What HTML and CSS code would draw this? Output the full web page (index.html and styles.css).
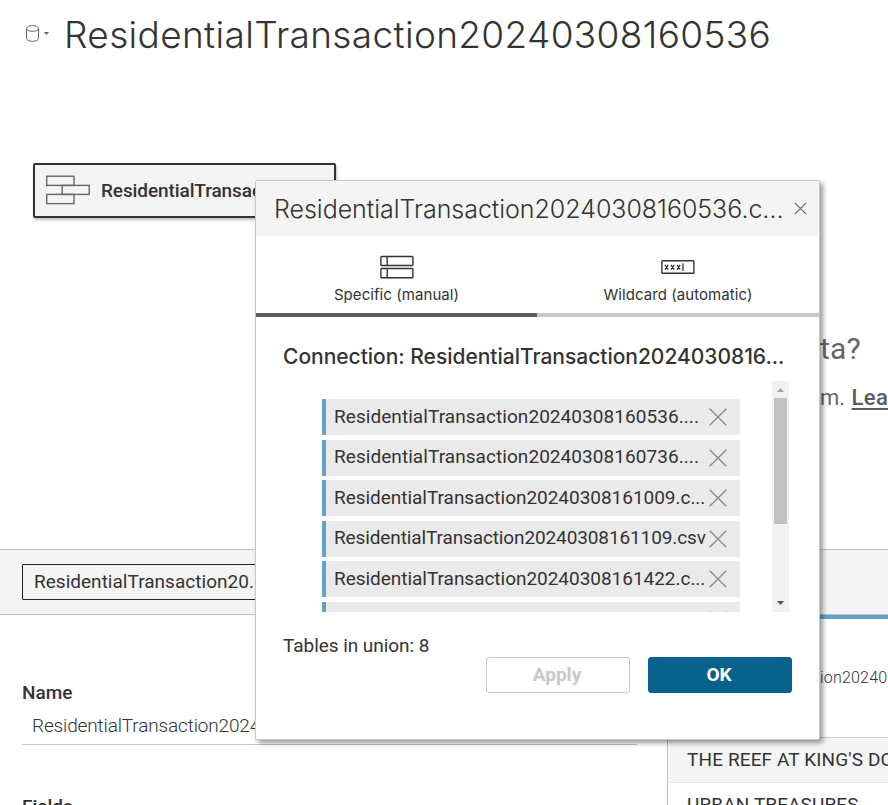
FILE: index.html
```html
<!DOCTYPE html>
<html lang="en">
<head>
<meta charset="utf-8">
<title>Data Source</title>
<link rel="stylesheet" href="styles.css">
</head>
<body>
<div class="page">
  <header class="top">
    <svg class="db" width="26" height="20" viewBox="0 0 26 20" fill="none" stroke="#666" stroke-width="1"><ellipse cx="7.5" cy="4.5" rx="6" ry="2.9"/><path d="M1.5 4.5V14.5C1.5 18.2 13.5 18.2 13.5 14.5V4.5"/><path d="M19 8h5l-2.5 3z" fill="#666" stroke="none"/></svg>
    <h1>ResidentialTransaction20240308160536</h1>
  </header>
  <section class="canvas">
    <div class="node">
      <svg width="46" height="32" viewBox="0 0 46 32" fill="none" stroke="#666" stroke-width="1.4"><rect x="1.7" y="1.2" width="27.3" height="9.2"/><rect x="17.2" y="10.4" width="27" height="9"/><rect x="1.7" y="19.4" width="27.3" height="9.2"/></svg>
      <span>ResidentialTransaction...</span>
    </div>
    <div class="hint">
      <p class="hint-title">ta?</p>
      <p class="hint-text">m. <a>Lea</a></p>
    </div>
  </section>
  <section class="bar"><div class="select">ResidentialTransaction20...</div></section>
  <section class="bottom">
    <div class="meta">
      <h2>Name</h2>
      <div class="name-input">ResidentialTransaction20240</div>
      <h2 class="fields">Fields</h2>
    </div>
    <div class="grid">
      <div class="grid-head">ion20240</div>
      <div class="grid-body">
        <div class="row alt">THE REEF AT KING'S DOCK</div>
        <div class="row">URBAN TREASURES</div>
      </div>
    </div>
  </section>
  <div class="dialog">
    <div class="dialog-head">
      <span class="dialog-title">ResidentialTransaction20240308160536.c...</span>
      <svg width="13" height="13" viewBox="0 0 13 13" stroke="#666" stroke-width="1.2"><path d="M.8.8l11.4 11.4M12.2.8L.8 12.2"/></svg>
    </div>
    <div class="tabs">
      <div class="tab active">
        <svg width="34" height="24" viewBox="0 0 34 24" fill="none" stroke="#333" stroke-width="1.4"><rect x=".9" y="1.5" width="32" height="9" rx=".8"/><rect x=".9" y="13.5" width="32" height="9.3" rx=".8"/><path d="M7.2 1.5v9M7.2 13.5v9.3"/></svg>
        <span>Specific (manual)</span>
      </div>
      <div class="tab wild">
        <svg width="34" height="24" viewBox="0 0 34 24" fill="none" stroke="#333" stroke-width="1.4"><rect x=".9" y="5.8" width="32" height="12.4" rx=".8"/><path d="M4 9.9l3.2 4.7M7.2 9.9L4 14.6M10 9.9l3.2 4.7M13.2 9.9L10 14.6M16 9.9l3.2 4.7M19.2 9.9L16 14.6M22 8.3v7.6" stroke-width="1.25"/></svg>
        <span>Wildcard (automatic)</span>
      </div>
    </div>
    <div class="connection">Connection: ResidentialTransaction2024030816...</div>
    <div class="list">
      <div class="items">
        <div class="item"><span class="wide">ResidentialTransaction20240308160536....</span><svg viewBox="0 0 18 18"><path d="M.7.7l16.6 16.6M17.3.7L.7 17.3"/></svg></div>
        <div class="item"><span class="wide">ResidentialTransaction20240308160736....</span><svg viewBox="0 0 18 18"><path d="M.7.7l16.6 16.6M17.3.7L.7 17.3"/></svg></div>
        <div class="item"><span>ResidentialTransaction20240308161009.c...</span><svg viewBox="0 0 18 18"><path d="M.7.7l16.6 16.6M17.3.7L.7 17.3"/></svg></div>
        <div class="item"><span class="tight">ResidentialTransaction20240308161109.csv</span><svg viewBox="0 0 18 18"><path d="M.7.7l16.6 16.6M17.3.7L.7 17.3"/></svg></div>
        <div class="item"><span>ResidentialTransaction20240308161422.c...</span><svg viewBox="0 0 18 18"><path d="M.7.7l16.6 16.6M17.3.7L.7 17.3"/></svg></div>
        <div class="item"><span></span><svg viewBox="0 0 18 18"><path d="M.7.7l16.6 16.6M17.3.7L.7 17.3"/></svg></div>
      </div>
      <div class="scroll">
        <svg width="17" height="17" viewBox="0 0 17 17" fill="#a3a3a3"><path d="M5 11l3.5-4 3.5 4z"/></svg>
        <div class="thumb"></div>
        <svg width="17" height="17" viewBox="0 0 17 17" fill="#505050"><path d="M5 6l3.5 4L12 6z"/></svg>
      </div>
    </div>
    <div class="count">Tables in union: 8</div>
    <div class="actions"><button class="apply">Apply</button><button class="ok">OK</button></div>
  </div>
</div>
</body>
</html>
```
FILE: styles.css
```css
* { box-sizing: border-box; }
body { margin: 0; background: #fff; color: #333; font: 400 19px/24px Roboto, "Liberation Sans", sans-serif; }
h1, h2, p { margin: 0; }
svg { display: block; flex: none; }
.page { position: relative; width: 888px; height: 805px; overflow: hidden; display: flex; flex-direction: column; white-space: nowrap; }
.top { flex: none; height: 74px; padding-left: 25px; display: flex; align-items: flex-start; }
.db { margin-top: 24px; }
h1 { margin: 13px 0 0 13px; font-family: Inter, sans-serif; font-size: 37px; line-height: 44px; font-weight: 300; letter-spacing: .35px; }

.canvas { flex: none; height: 475px; display: flex; justify-content: space-between; }
.node { margin: 89px 0 0 33px; width: 303px; height: 55px; border: 2px solid #333; border-radius: 2px; background: #f4f4f4; box-shadow: 1px 2px 3px rgba(0,0,0,.25); display: flex; align-items: center; padding: 0 0 0 10px; gap: 10px; font-weight: 500; letter-spacing: -.1px; overflow: hidden; }
.hint { width: 68px; padding-top: 257px; color: #666; }
.hint-title { font-size: 30px; line-height: 36px; letter-spacing: .2px; }
.hint-text { margin-top: 18px; font-size: 22px; line-height: 26px; }
.hint-text a { margin-left: 1px; font-weight: 500; color: #5b5b5b; text-decoration: underline; text-decoration-thickness: 2px; text-underline-offset: 3px; letter-spacing: .4px; }

.bar { flex: none; height: 66px; background: #f4f4f4; border: solid #bfbfbf; border-width: 1px 0; padding: 14px 0 0 22px; }
.select { width: 300px; height: 36px; border: 1px solid #222; border-radius: 1px; padding: 4px 0 0 11px; line-height: 26px; letter-spacing: .02px; }

.bottom { flex: 1; min-height: 0; display: flex; }
.meta { width: 667px; padding: 66px 30px 0 22px; }
h2 { font-size: 19px; line-height: 24px; font-weight: 500; letter-spacing: 0; }
.name-input { height: 40px; padding: 9px 0 0 10px; border-bottom: 1px solid #c4c4c4; font-weight: 300; letter-spacing: -.15px; }
.fields { margin-top: 50px; }
.grid { flex: 1; border-left: 1px solid #bfbfbf; border-top: 4px solid #5fa2c6; overflow: hidden; }
.grid-head { height: 118px; padding: 46px 0 0 152px; font-size: 16px; line-height: 26px; font-weight: 300; letter-spacing: .2px; }
.grid-body { margin-left: 1px; border-top: 1px solid #ccc; }
.row { height: 45px; padding-left: 18px; line-height: 43px; border-bottom: 1px solid #e6e6e6; letter-spacing: .12px; }
.alt { background: #f4f4f4; }

.dialog { position: absolute; left: 255px; top: 180px; width: 565px; height: 560px; background: #fff; border: 1px solid #c8c8c8; border-radius: 2px; box-shadow: 3px 3px 5px rgba(0,0,0,.4); display: flex; flex-direction: column; }
.dialog-head { height: 55px; background: #f4f4f4; display: flex; align-items: center; padding: 0 12px 0 18px; justify-content: space-between; }
.dialog-title { font-family: Inter, sans-serif; font-size: 25px; line-height: 34px; font-weight: 300; letter-spacing: -.03px; }
.tabs { height: 81px; display: flex; }
.tab { flex: 0 0 281px; display: flex; flex-direction: column; align-items: center; padding-top: 19px; border-bottom: 4px solid #c8c8c8; font-family: Inter, sans-serif; font-size: 15px; line-height: 20px; letter-spacing: .07px; gap: 6px; }
.active { border-color: #5b5b5b; }
.wild { flex: 1; }
.connection { margin: 26px 0 0 27px; font-family: Inter, sans-serif; font-size: 21px; line-height: 28px; font-weight: 500; letter-spacing: -.02px; }
.list { margin: 10px 0 0 66px; width: 467px; height: 231px; overflow: hidden; display: flex; justify-content: space-between; }
.items { width: 418px; padding-top: 18px; display: flex; flex-direction: column; gap: 4.6px; }
.item { height: 36px; flex: none; background: #eaeaea; border-left: 4px solid #62a3c7; padding: 0 13px 0 8px; display: flex; align-items: center; justify-content: space-between; letter-spacing: -.03px; }
.item span { padding-bottom: 1px; margin-right: -8px; }
.item .wide { letter-spacing: .06px; }
.item .tight { letter-spacing: -.12px; }
.item svg { width: 18px; height: 18px; stroke: #888; stroke-width: 1.3; }
.scroll { width: 17px; background: #f1f1f1; display: flex; flex-direction: column; align-items: center; }
.thumb { width: 13px; height: 126px; background: #c1c1c1; margin-bottom: auto; }
.count { margin: 22px 0 0 27px; line-height: 24px; letter-spacing: -.05px; }
.actions { margin-top: -1px; display: flex; justify-content: flex-end; gap: 18px; padding-right: 27px; }
.actions button { width: 144px; height: 36px; border-radius: 3px; border: 1px solid #c8c8c8; background: #fff; color: #c8c8c8; font: 700 19px/24px Roboto, sans-serif; padding: 0 2px 0 0; }
.actions .ok { background: #06628b; border-color: #06628b; color: #fff; }
```
